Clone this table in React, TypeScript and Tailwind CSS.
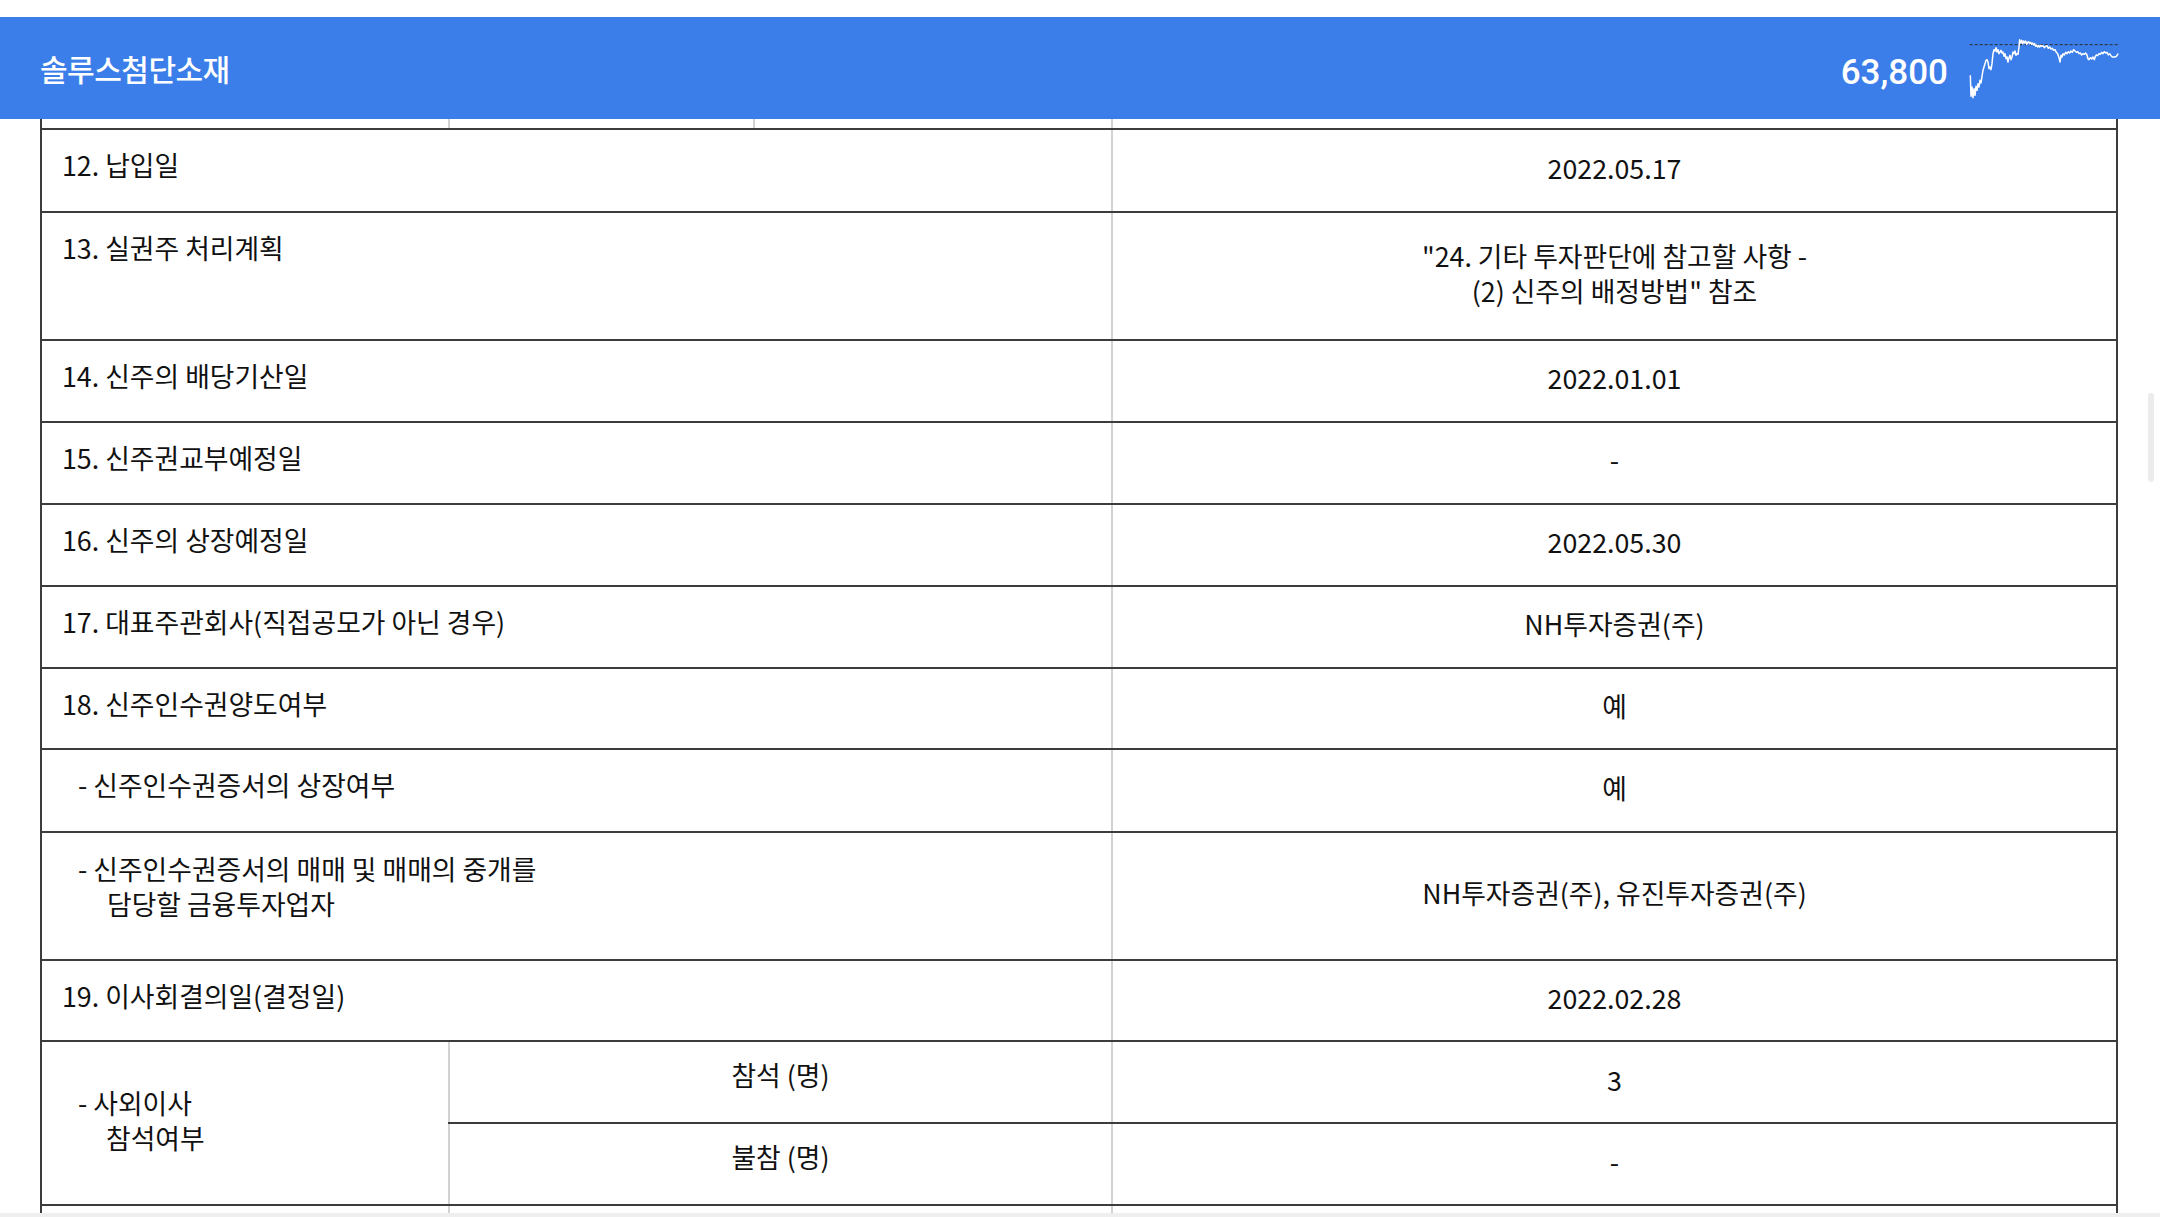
import React from "react";

type RowDef = {
  hClass: string;
  left: React.ReactNode;
  right: React.ReactNode;
  indent?: boolean;
};

const rows: RowDef[] = [
  { hClass: "h-[83px]", left: "12. 납입일", right: "2022.05.17" },
  {
    hClass: "h-[128px]",
    left: "13. 실권주 처리계획",
    right: (
      <>
        <div className="h-[35px] leading-[35px]">"24. 기타 투자판단에 참고할 사항 -</div>
        <div className="h-[35px] leading-[35px]">(2) 신주의 배정방법" 참조</div>
      </>
    ),
  },
  { hClass: "h-[82px]", left: "14. 신주의 배당기산일", right: "2022.01.01" },
  { hClass: "h-[82px]", left: "15. 신주권교부예정일", right: "-" },
  { hClass: "h-[82px]", left: "16. 신주의 상장예정일", right: "2022.05.30" },
  { hClass: "h-[82px]", left: "17. 대표주관회사(직접공모가 아닌 경우)", right: "NH투자증권(주)" },
  { hClass: "h-[81px]", left: "18. 신주인수권양도여부", right: "예" },
  { hClass: "h-[83px]", left: "- 신주인수권증서의 상장여부", right: "예", indent: true },
  {
    hClass: "h-[128px]",
    left: (
      <>
        <div className="h-[35px] leading-[35px]">- 신주인수권증서의 매매 및 매매의 중개를</div>
        <div className="h-[35px] pl-[29px] leading-[35px]">담당할 금융투자업자</div>
      </>
    ),
    right: "NH투자증권(주), 유진투자증권(주)",
    indent: true,
  },
  { hClass: "h-[81px]", left: "19. 이사회결의일(결정일)", right: "2022.02.28" },
];

function Spark() {
  const pts =
    "422,165 424,228 427,200 430,232 433,205 436,225 439,198 442,210 445,190 448,200 451,180 454,188 457,168 460,150 463,140 466,130 469,120 472,118 475,125 478,145 481,140 484,148 487,130 490,100 493,88 496,92 499,82 502,95 505,88 508,100 511,95 514,90 517,98 520,95 523,108 526,100 529,115 532,110 535,125 538,112 541,105 544,118 547,110 550,95 553,100 556,92 559,105 562,100 565,102 568,80 570,58 573,68 576,60 579,70 582,62 585,68 588,62 591,72 594,66 597,64 600,70 603,66 606,72 609,68 612,74 615,70 618,78 621,74 624,80 627,76 630,80 633,75 636,78 640,76 644,82 648,78 652,76 656,84 660,80 664,86 668,84 672,90 676,88 680,96 684,100 688,112 691,125 694,105 697,110 700,100 704,104 708,96 712,100 716,94 720,98 724,92 728,96 732,88 736,92 740,96 744,94 748,100 752,98 756,104 760,100 764,102 768,98 772,104 775,116 778,118 782,112 786,116 790,110 794,118 797,108 800,104 804,106 808,100 812,102 816,96 820,100 824,94 828,98 832,96 836,104 840,100 844,106 848,110 852,110 856,110 860,108 864,102 866,100";
  return (
    <svg width="151" height="63" viewBox="418 50 453 189" className="block">
      <line x1="420" y1="73" x2="866" y2="73" stroke="#2a2a2a" strokeWidth="3" strokeDasharray="9 6" />
      <polyline points={pts} fill="none" stroke="#ffffff" strokeWidth="4.5" strokeLinejoin="round" />
    </svg>
  );
}

export default function App() {
  return (
    <div className="relative min-h-screen bg-white font-['Noto_Sans_CJK_KR',sans-serif] text-[26.8px] text-[#111]">
      <div className="h-[17px]" />
      <header className="flex h-[102px] items-center justify-between bg-[#3b7ee9] pl-[40px] pr-[40px]">
        <div className="text-[30px] font-medium tracking-[-0.5px] text-white">솔루스첨단소재</div>
        <div className="flex items-center gap-[21px]">
          <span className="mt-[10px] font-['Roboto',sans-serif] text-[35px] font-medium text-white">63,800</span>
          <Spark />
        </div>
      </header>

      <div className="ml-[40px] w-[2078px] border-x-2 border-[#3c3c3c]">
        <div className="flex h-[9px]">
          <div className="w-[406px] shrink-0" />
          <div className="w-[305px] shrink-0 border-l-2 border-[#d2d2d2]" />
          <div className="w-[358px] shrink-0 border-l-2 border-[#d2d2d2]" />
          <div className="flex-1 border-l-2 border-[#d2d2d2]" />
        </div>

        {rows.map((r, i) => (
          <div key={i} className={`flex border-t-2 border-[#3c3c3c] ${r.hClass}`}>
            <div
              className={`w-[1069px] shrink-0 pt-[18px] leading-[34px] ${r.indent ? "pl-[36px]" : "pl-[20px]"}`}
            >
              {r.left}
            </div>
            <div className="flex flex-1 items-center justify-center border-l-2 border-[#d2d2d2] pb-[6px] text-center leading-[34px]">
              <div>{r.right}</div>
            </div>
          </div>
        ))}

        <div className="flex h-[164px] border-t-2 border-[#3c3c3c]">
          <div className="flex w-[406px] shrink-0 items-center pb-[6px] pl-[36px] leading-[35px]">
            <div>
              <div className="h-[35px]">- 사외이사</div>
              <div className="h-[35px] pl-[28px]">참석여부</div>
            </div>
          </div>
          <div className="flex flex-1 flex-col">
            <div className="flex h-[81px]">
              <div className="flex w-[663px] shrink-0 justify-center border-l-2 border-[#d2d2d2] pt-[16px] leading-[34px]">
                참석 (명)
              </div>
              <div className="flex flex-1 items-center justify-center border-l-2 border-[#d2d2d2] pb-[4px] leading-[34px]">
                3
              </div>
            </div>
            <div className="flex h-[83px] border-t-2 border-[#3c3c3c]">
              <div className="flex w-[663px] shrink-0 justify-center border-l-2 border-[#d2d2d2] pt-[16px] leading-[34px]">
                불참 (명)
              </div>
              <div className="flex flex-1 items-center justify-center border-l-2 border-[#d2d2d2] pb-[4px] leading-[34px]">
                -
              </div>
            </div>
          </div>
        </div>

        <div className="flex h-[80px] border-t-2 border-[#3c3c3c]">
          <div className="w-[406px] shrink-0" />
          <div className="w-[663px] shrink-0 border-l-2 border-[#d2d2d2]" />
          <div className="flex-1 border-l-2 border-[#d2d2d2]" />
        </div>
      </div>

      <div className="fixed left-[2148px] top-[393px] h-[89px] w-[6px] rounded-full bg-[#ececec]" />
      <div className="fixed bottom-0 left-0 h-[4px] w-full bg-[#efefef]" />
    </div>
  );
}
